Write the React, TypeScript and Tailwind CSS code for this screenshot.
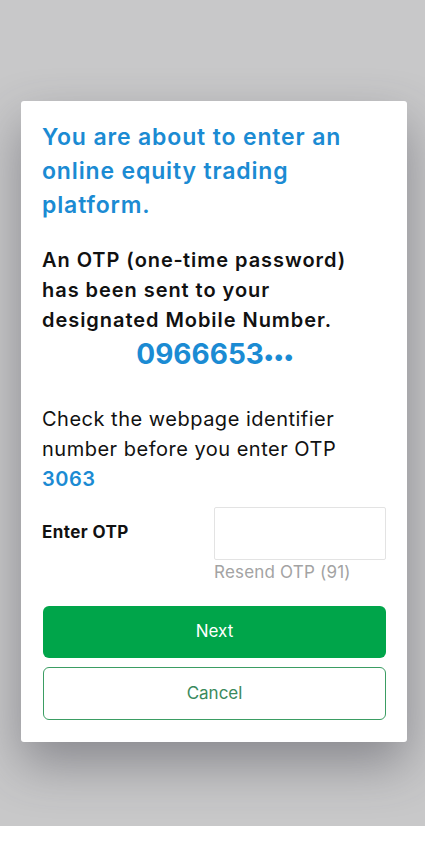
import React from "react";

export default function App() {
  return (
    <div className="w-[425px] h-[863px] flex flex-col bg-white" style={{ fontFamily: "Inter, 'Noto Sans', 'Liberation Sans', sans-serif" }}>
      <div className="h-[826px] bg-[#c8c8c9] pt-[101px]">
        <div className="ml-[21px] w-[386px] bg-white rounded-[3px] shadow-[0_22px_50px_rgba(60,60,70,0.45)] px-[21px] pt-[19px] pb-[22px]">
          <h1 className="text-[23px] leading-[34px] font-semibold text-[#1b8bd3] tracking-[0.85px]">
            You are about to enter an online equity trading platform.
          </h1>
          <p className="mt-[23px] text-[20px] leading-[30px] font-semibold text-[#111] tracking-[0.95px]">
            An OTP (one‑time password) has been sent to your designated Mobile Number.
          </p>
          <div className="text-center text-[28px] leading-[36px] font-bold text-[#1b8bd3] mt-[1px] pl-[2px]">
            0966653<span className="text-[21px] tracking-[0px]">•••</span>
          </div>
          <p className="mt-[29px] text-[20px] leading-[30px] text-[#111] tracking-[0.5px]">
            Check the webpage identifier number before you enter OTP
            <br />
            <span className="font-semibold text-[#1b8bd3]">3063</span>
          </p>
          <div className="mt-[13px] flex">
            <div className="w-[172px] pt-[13px] text-[17px] font-bold text-[#111] tracking-[0.4px]">Enter OTP</div>
            <div className="flex-1">
              <div className="h-[53px] border border-[#e3e3e3] rounded-[2px]" />
              <div className="text-[17px] leading-[24px] text-[#a3a3a3] tracking-[0.2px]">Resend OTP (91)</div>
            </div>
          </div>
          <div className="pl-[1px]">
            <button className="mt-[22px] w-full h-[52px] rounded-[6px] bg-[#00a54a] text-white text-[17px] flex items-center justify-center">
              Next
            </button>
            <button className="mt-[9px] w-full h-[53px] rounded-[6px] border border-[#3b9d63] bg-white text-[#3a8a5c] text-[17px] flex items-center justify-center">
              Cancel
            </button>
          </div>
        </div>
      </div>
      <div className="flex-1 bg-white" />
    </div>
  );
}
